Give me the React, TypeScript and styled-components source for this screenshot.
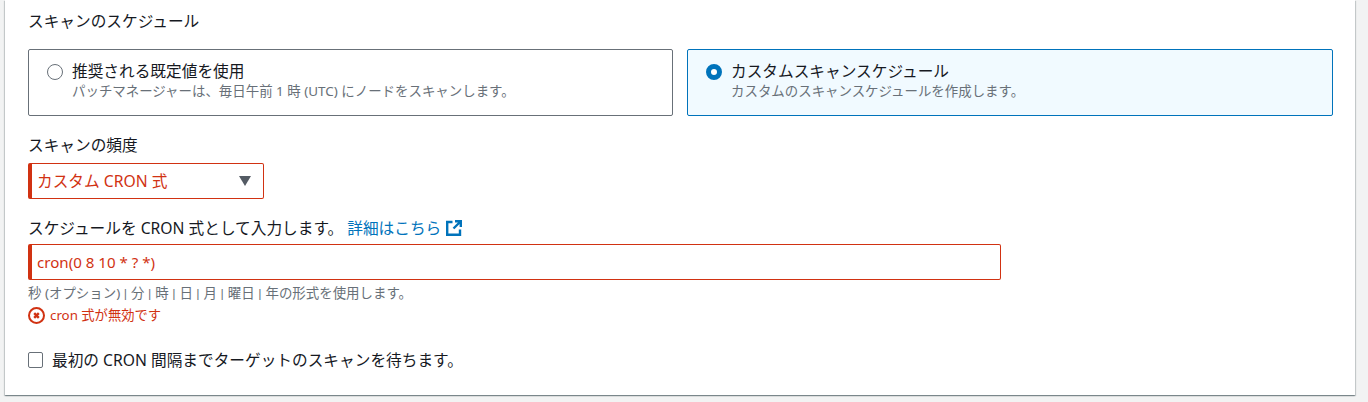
import React from "react";
import styled, { createGlobalStyle } from "styled-components";

const GlobalStyle = createGlobalStyle`
  html, body {
    margin: 0;
    padding: 0;
    background: #f2f3f3;
    height: 402px;
    overflow: hidden;
    font-family: "Noto Sans", "Noto Sans CJK JP", sans-serif;
    font-size: 15.68px;
    line-height: 22px;
    color: #16191f;
  }
`;

const Panel = styled.div`
  width: 1350px;
  height: 395px;
  margin-left: 5px;
  box-sizing: border-box;
  padding: 10px 22px 0 23px;
  background: #fff;
  box-shadow: 0 1px 1px 0 rgba(0, 28, 36, 0.3), 1px 1px 1px 0 rgba(0, 28, 36, 0.15),
    -1px 1px 1px 0 rgba(0, 28, 36, 0.15);
`;

const Label = styled.div`
  height: 22px;
  line-height: 22px;
  color: #16191f;
`;

const TileRow = styled.div`
  display: grid;
  grid-template-columns: 645px 646px;
  gap: 14px;
  margin-top: 17px;
`;

const Tile = styled.div<{ $selected?: boolean }>`
  box-sizing: border-box;
  height: 67px;
  padding: 11px 18px;
  display: flex;
  gap: 9px;
  border: 1px solid ${(p) => (p.$selected ? "#0073bb" : "#687078")};
  border-radius: 2px;
  background: ${(p) => (p.$selected ? "#f1faff" : "#fff")};
`;

const Radio = styled.span<{ $checked?: boolean }>`
  flex: none;
  box-sizing: border-box;
  width: 16px;
  height: 16px;
  margin-top: 3px;
  border-radius: 50%;
  background: #fff;
  border: ${(p) => (p.$checked ? "5px solid #0073bb" : "1px solid #687078")};
`;

const TileText = styled.div`
  display: flex;
  flex-direction: column;
`;

const TileTitle = styled.div`
  line-height: 20px;
  height: 20px;
`;

const Hint = styled.div`
  font-size: 13.45px;
  line-height: 20px;
  height: 20px;
  color: #687078;
`;

const Pipe = styled.span`
  font-family: Roboto, sans-serif;
  letter-spacing: 0.5px;
`;

const Field = styled.div<{ $top: number }>`
  margin-top: ${(p) => p.$top}px;
`;

const SelectBox = styled.div`
  box-sizing: border-box;
  margin-top: 7px;
  width: 236px;
  height: 36px;
  padding: 0 12px 0 5px;
  display: flex;
  align-items: center;
  justify-content: space-between;
  color: #d13212;
  background: #fff;
  border: 1px solid #d13212;
  border-left-width: 4px;
  border-radius: 2px;
`;

const Caret = styled.svg`
  width: 12px;
  height: 10px;
  fill: #545b64;
`;

const LabelLine = styled.div`
  display: flex;
  align-items: center;
  height: 22px;
`;

const DocLink = styled.a`
  color: #0073bb;
  margin-left: 4px;
  display: inline-flex;
  align-items: center;
  gap: 5px;
`;

const ExternalIcon = styled.svg`
  width: 16px;
  height: 16px;
  fill: none;
  stroke: #0073bb;
  stroke-width: 2.4;
`;

const TextBox = styled.div`
  box-sizing: border-box;
  margin-top: 5px;
  width: 973px;
  height: 36px;
  padding: 0 5px;
  display: flex;
  align-items: center;
  font-size: 15.1px;
  color: #d13212;
  background: #fff;
  border: 1px solid #d13212;
  border-left-width: 4px;
  border-radius: 2px;
`;

const HelpText = styled(Hint)`
  margin-top: 3px;
  height: 20px;
`;

const ErrorRow = styled.div`
  margin-top: 2px;
  display: flex;
  align-items: center;
  gap: 5px;
  height: 20px;
  font-size: 13.3px;
  color: #d13212;
`;

const ErrorIcon = styled.svg`
  width: 17px;
  height: 17px;
  flex: none;
`;

const CheckRow = styled.div`
  margin-top: 24px;
  display: flex;
  align-items: center;
  gap: 9px;
  height: 22px;
`;

const CheckBox = styled.span`
  box-sizing: border-box;
  width: 15px;
  height: 16px;
  border: 1px solid #687078;
  border-radius: 2px;
  background: #fff;
`;

export default function App() {
  return (
    <>
      <GlobalStyle />
      <Panel>
        <Label>スキャンのスケジュール</Label>
        <TileRow>
          <Tile>
            <Radio />
            <TileText>
              <TileTitle>推奨される既定値を使用</TileTitle>
              <Hint>パッチマネージャーは、毎日午前 1 時 (UTC) にノードをスキャンします。</Hint>
            </TileText>
          </Tile>
          <Tile $selected>
            <Radio $checked />
            <TileText>
              <TileTitle>カスタムスキャンスケジュール</TileTitle>
              <Hint>カスタムのスキャンスケジュールを作成します。</Hint>
            </TileText>
          </Tile>
        </TileRow>
        <Field $top={18}>
          <Label>スキャンの頻度</Label>
          <SelectBox>
            カスタム CRON 式
            <Caret viewBox="0 0 12 10">
              <path d="M0 0h12L6 10z" />
            </Caret>
          </SelectBox>
        </Field>
        <Field $top={18}>
          <LabelLine>
            スケジュールを CRON 式として入力します。
            <DocLink>
              詳細はこちら
              <ExternalIcon viewBox="0 0 16 16">
                <path d="M6.5 2H1.2v12.8H14V9.5" />
                <path d="M9 1.2h5.8V7M14.5 1.5L7.5 8.5" />
              </ExternalIcon>
            </DocLink>
          </LabelLine>
          <TextBox>cron(0 8 10 * ? *)</TextBox>
          <HelpText>
            秒 (オプション) <Pipe>|</Pipe> 分 <Pipe>|</Pipe> 時 <Pipe>|</Pipe> 日 <Pipe>|</Pipe> 月{" "}
            <Pipe>|</Pipe> 曜日 <Pipe>|</Pipe> 年の形式を使用します。
          </HelpText>
          <ErrorRow>
            <ErrorIcon viewBox="0 0 17 17">
              <circle cx="8.5" cy="8.5" r="7.5" fill="none" stroke="#d13212" strokeWidth="2" />
              <path d="M6.2 6.2l4.6 4.6M10.8 6.2l-4.6 4.6" stroke="#d13212" strokeWidth="2.4" />
            </ErrorIcon>
            cron 式が無効です
          </ErrorRow>
        </Field>
        <CheckRow>
          <CheckBox />
          最初の CRON 間隔までターゲットのスキャンを待ちます。
        </CheckRow>
      </Panel>
    </>
  );
}
